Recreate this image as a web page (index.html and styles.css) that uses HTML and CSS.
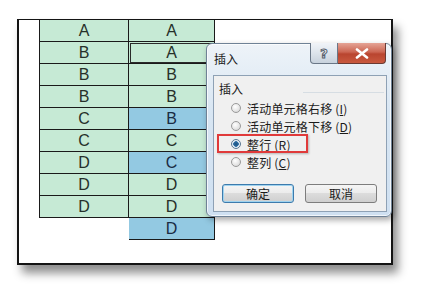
FILE: index.html
```html
<!DOCTYPE html>
<html>
<head>
<meta charset="utf-8">
<link rel="stylesheet" href="styles.css">
</head>
<body>
<div class="page">
  <div class="frame">
    <div class="sheet">
      <div class="cell c1 g">A</div><div class="cell c2 g">A</div>
      <div class="cell c1 g">B</div><div class="cell c2 g sel">A</div>
      <div class="cell c1 g">B</div><div class="cell c2 g">B</div>
      <div class="cell c1 g">B</div><div class="cell c2 g">B</div>
      <div class="cell c1 g">C</div><div class="cell c2 b">B</div>
      <div class="cell c1 g">C</div><div class="cell c2 g">C</div>
      <div class="cell c1 g">D</div><div class="cell c2 b">C</div>
      <div class="cell c1 g">D</div><div class="cell c2 g">D</div>
      <div class="cell c1 g">D</div><div class="cell c2 g">D</div>
      <div class="cell empty"></div><div class="cell c2 b">D</div>
    </div>
  </div>

  <div class="dialog">
    <div class="titlebar">
      <span class="title">插入</span>
      <div class="caption-btns">
        <div class="help">?</div>
        <div class="close">
          <svg width="14" height="11" viewBox="0 0 14 11"><path d="M2 1.5 L12 9.5 M12 1.5 L2 9.5" stroke="#fff" stroke-width="2.6" stroke-linecap="round"/></svg>
        </div>
      </div>
    </div>
    <div class="panel">
      <div class="group">
        <span class="group-label">插入</span>
        <span class="group-line"></span>
      </div>
      <div class="options">
        <div class="opt"><span class="radio"></span><span class="label">活动单元格右移 (<u>I</u>)</span></div>
        <div class="opt"><span class="radio"></span><span class="label">活动单元格下移 (<u>D</u>)</span></div>
        <div class="opt hl"><span class="radio on"></span><span class="label">整行 (<u>R</u>)</span></div>
        <div class="opt"><span class="radio"></span><span class="label">整列 (<u>C</u>)</span></div>
      </div>
      <div class="buttons">
        <div class="btn default">确定</div>
        <div class="btn">取消</div>
      </div>
    </div>
  </div>
</div>
</body>
</html>
```
FILE: styles.css
```css
html, body {
  margin: 0;
  padding: 0;
  background: #fff;
}
.page {
  position: relative;
  width: 433px;
  height: 290px;
  overflow: hidden;
  padding: 19px 0 0 17px;
  box-sizing: border-box;
}
.frame {
  width: 376px;
  height: 246px;
  box-sizing: border-box;
  border: 2px solid #141414;
  border-top-width: 1.5px;
  background: #fff;
  box-shadow: 5px 8px 9px rgba(0,0,0,0.45);
  padding-left: 20px;
}
.sheet {
  display: grid;
  grid-template-columns: 90px 86px;
  grid-auto-rows: 22px;
  font-family: "Liberation Sans", Arial, sans-serif;
  font-size: 16px;
  color: #26302a;
}
.cell {
  box-sizing: border-box;
  display: flex;
  align-items: center;
  justify-content: center;
  border-bottom: 1px solid #1a1a1a;
  border-right: 1px solid #1a1a1a;
  position: relative;
}
.cell.c1 { border-left: 1px solid #1a1a1a; }
.cell.empty { border: none; }
.g { background: #c6ead5; }
.b { background: #93c9e2; color: #1a2c44; }
.sel::after {
  content: "";
  position: absolute;
  left: 1px; top: 1px; right: 0; bottom: 0;
  border: 1.5px solid #2a2a2a;
}

.dialog {
  position: absolute;
  left: 206px;
  top: 43px;
  width: 186px;
  height: 174px;
  box-sizing: border-box;
  border: 1px solid #6f8296;
  border-radius: 6px;
  background: linear-gradient(#eef3f8, #d8e6f3 40%, #cfe0f1);
  box-shadow: 2px 3px 6px rgba(0,0,0,0.35), inset 0 0 0 1px rgba(255,255,255,0.7);
  display: flex;
  flex-direction: column;
  padding: 0 4px 4px 6px;
  font-family: "Noto Sans CJK SC", "Noto Sans", sans-serif;
  color: #1b1b1b;
}
.titlebar {
  height: 31px;
  display: flex;
  align-items: flex-start;
  justify-content: space-between;
}
.title {
  font-size: 12px;
  line-height: 12px;
  margin-top: 9px;
  margin-left: 1px;
}
.caption-btns {
  display: flex;
  margin-right: 1px;
  margin-top: -1px;
}
.help {
  width: 28px;
  height: 21px;
  box-sizing: border-box;
  border: 1px solid #6a7787;
  border-top: none;
  border-radius: 0 0 0 4px;
  background: linear-gradient(#f1f4f8, #dde4ec 50%, #c8d2dd);
  display: flex;
  align-items: center;
  justify-content: center;
  font-family: "DejaVu Sans", sans-serif;
  font-weight: bold;
  font-size: 13px;
  color: #f2f2f2;
  -webkit-text-stroke: 1px #56606c;
}
.close {
  width: 48px;
  height: 21px;
  box-sizing: border-box;
  border: 1px solid #6a3a33;
  border-top: none;
  border-left: none;
  border-radius: 0 0 4px 0;
  background: linear-gradient(#e5a496, #cc6652 45%, #b9452f 55%, #c9593f);
  display: flex;
  align-items: center;
  justify-content: center;
}
.panel {
  flex: 1;
  box-sizing: border-box;
  border: 1px solid #8ea1b5;
  background: #f0f0f0;
  display: flex;
  flex-direction: column;
  padding-left: 5px;
  position: relative;
}
.group {
  display: flex;
  align-items: center;
  height: 16px;
  margin-top: 5px;
}
.group-label {
  font-size: 12px;
  line-height: 16px;
}
.group-line {
  flex: 1;
  height: 1px;
  background: #d6dde3;
  margin: 0 2px 4px 60px;
  align-self: flex-end;
}
.options {
  display: flex;
  flex-direction: column;
  margin-top: 2px;
}
.opt {
  height: 18px;
  display: flex;
  align-items: center;
  padding-left: 12px;
  font-size: 12px;
  position: relative;
}
.opt .label { margin-left: 6px; letter-spacing: 0.2px; }
.opt u { text-decoration: underline; text-underline-offset: 1px; }
.radio {
  width: 10px;
  height: 10px;
  border-radius: 50%;
  box-sizing: border-box;
  border: 1px solid #9a9a9a;
  background: radial-gradient(circle at 40% 35%, #ffffff, #e4e4e4 60%, #cfcfcf);
}
.radio.on {
  border-color: #5b7892;
  background: radial-gradient(circle, #1e4f7a 0, #2d6fa6 2.5px, #dfe9f2 3px, #f5f8fb 5px);
}
.opt.hl::before {
  content: "";
  position: absolute;
  left: -2px;
  top: -1px;
  width: 91px;
  height: 19px;
  box-sizing: border-box;
  border: 2px solid #e03a3a;
  box-shadow: 1px 1px 2px rgba(0,0,0,0.25);
}
.buttons {
  display: flex;
  margin-top: 13px;
  margin-left: 3px;
  gap: 11px;
}
.btn {
  width: 72px;
  height: 19px;
  box-sizing: border-box;
  border: 1px solid #7d7d7d;
  border-radius: 3px;
  background: linear-gradient(#f5f5f5, #ebebeb 50%, #dcdcdc 50%, #cfcfcf);
  display: flex;
  align-items: center;
  justify-content: center;
  font-size: 12px;
  color: #1b1b1b;
}
.btn.default {
  border-color: #3d7bad;
  box-shadow: inset 0 0 0 1px #9fd3ef;
}
```
